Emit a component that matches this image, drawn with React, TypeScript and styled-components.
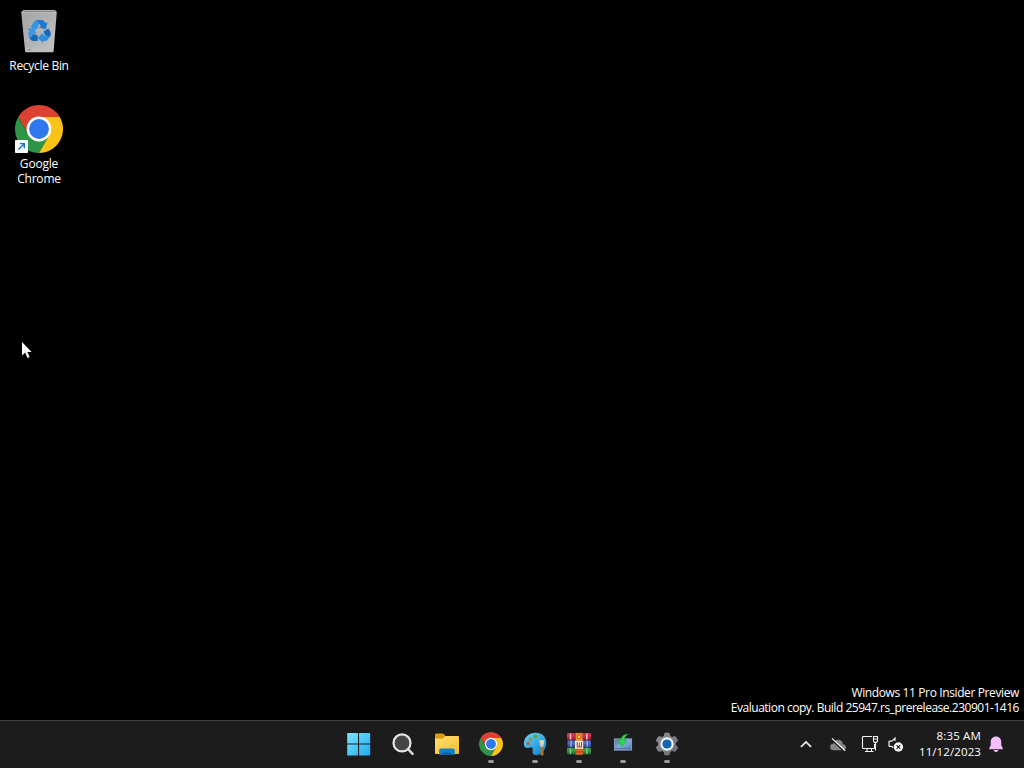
import React from 'react';
import styled, { createGlobalStyle } from 'styled-components';

const GlobalStyle = createGlobalStyle`
  * { box-sizing: border-box; }
  body { margin: 0; background: #000; overflow: hidden; }
  svg { display: block; flex: none; }
`;

const Screen = styled.div`
  position: relative;
  display: flex;
  flex-direction: column;
  width: 100vw;
  height: 100vh;
  background: #000;
  color: #fff;
  font-family: 'Open Sans', 'Noto Sans', sans-serif;
  font-size: 12px;
  cursor: default;
`;

const Desktop = styled.main`
  flex: 1;
  display: flex;
  flex-direction: column;
  justify-content: space-between;
  padding: 7px 5px 5px 1px;
`;

const Shortcuts = styled.div`
  display: flex;
  flex-direction: column;
  width: 76px;
`;

const Shortcut = styled.div`
  display: flex;
  flex-direction: column;
  align-items: center;
  height: 98px;
`;

const ShortcutLabel = styled.span<{ $spacing: number }>`
  margin-top: 3px;
  line-height: 15px;
  text-align: center;
  white-space: pre-line;
  letter-spacing: ${(p) => p.$spacing}px;
`;

const Watermark = styled.div`
  display: flex;
  flex-direction: column;
  align-items: flex-end;
  line-height: 15px;
`;

const WatermarkLine = styled.span<{ $spacing: number }>`
  letter-spacing: ${(p) => p.$spacing}px;
  white-space: nowrap;
`;

const Taskbar = styled.footer`
  display: grid;
  grid-template-columns: 1fr auto 1fr;
  height: 48px;
  border-top: 1px solid #424242;
  background: #1c1c1c;
`;

const Apps = styled.nav`
  grid-column: 2;
  display: flex;
`;

const AppButton = styled.div`
  display: flex;
  flex-direction: column;
  align-items: center;
  width: 44px;
  padding: 11px 0 0 1px;
`;

const Running = styled.span`
  width: 6px;
  height: 3px;
  margin-top: 4px;
  border-radius: 1.5px;
  background: #9a9a9a;
`;

const Tray = styled.div`
  display: flex;
  align-items: center;
  justify-content: flex-end;
  padding-right: 20px;
`;

const TrayItem = styled.div<{ $width: number }>`
  display: flex;
  justify-content: center;
  width: ${(p) => p.$width}px;
`;

const Clock = styled.div`
  display: flex;
  flex-direction: column;
  align-items: flex-end;
  width: 76px;
  margin-right: 7px;
  padding-bottom: 2px;
  font-size: 11.5px;
  line-height: 16px;
  white-space: nowrap;
`;

const ClockLine = styled.span<{ $spacing: number }>`
  letter-spacing: ${(p) => p.$spacing}px;
`;

const Pointer = styled.svg`
  position: absolute;
  left: 21px;
  top: 341px;
`;

const ChromeIcon = ({ size, shortcut }: { size: number; shortcut?: boolean }) => (
  <svg width={size} height={size} viewBox="0 0 48 48">
    <path fill="#dc4132" d="M24 12H44.78A24 24 0 0 0 3.22 12L13.61 30A12 12 0 0 1 24 12Z" />
    <path fill="#2c9547" d="M3.22 12A24 24 0 0 0 24 48L34.39 30A12 12 0 0 1 13.61 30Z" />
    <path fill="#fcc317" d="M44.78 12A24 24 0 0 1 24 48L34.39 30A12 12 0 0 0 24 12Z" />
    <circle cx="24" cy="24" r="12.4" fill="#fff" />
    <circle cx="24" cy="24" r="9.9" fill="#2f78ee" />
    {shortcut && (
      <g>
        <rect x="0" y="35" width="13" height="13" rx="0.8" fill="#f8fafb" />
        <path d="M3.4 44.6L9 39M4.8 38.6H9.3V43.2" fill="none" stroke="#1d74b8" strokeWidth="1.4" />
      </g>
    )}
  </svg>
);

const RecycleBinIcon = () => (
  <svg width="48" height="48" viewBox="0 0 48 48">
    <defs>
      <linearGradient id="bin" x1="0" y1="0" x2="1" y2="1">
        <stop offset="0" stopColor="#a3a4a5" />
        <stop offset="0.55" stopColor="#b3b4b5" />
        <stop offset="1" stopColor="#c4c4c5" />
      </linearGradient>
    </defs>
    <path d="M6.2 5L8 3.2H40L41.8 5L38.6 44.2Q38.5 45.2 37.5 45.2H11.2Q10.2 45.2 10.1 44.2Z" fill="url(#bin)" />
    <path d="M7.2 5.6L8.6 3.7H39.6L41 5.6Z" fill="#777878" stroke="#c9caca" strokeWidth="0.8" />
    <path d="M10.4 41H38.2L37.9 44.8H10.8Z" fill="#bdbdbe" />
    <path d="M12.8 43L15.8 42.6" stroke="#777" strokeWidth="1" />
    <g>
      <path d="M15.8 20L18.6 15.2Q20 13 22.2 13H25.6L21.8 22.6Z" fill="#3494e4" />
      <path d="M21.8 13H26.6Q28.6 13 29.5 14.6L30.4 16.2L32.6 15L30.8 22.2L23.8 20.6L26 19.3Z" fill="#1b79cc" />
      <path d="M28.6 24.2L33.5 21.4L35.4 25Q36.2 27 35.1 29L33.9 31L29.6 27.6Z" fill="#1668b7" />
      <path d="M34.4 30.1L32.9 32.5Q31.8 34 30 34H28.2V36L22.6 31L28.2 25.8V28.4H33Z" fill="#2d8edf" />
      <path d="M22.7 28.2V34H18.2Q16.4 34 15.3 32.2L13.9 29.4L18 27Z" fill="#1469bd" />
      <path d="M14 30Q12.4 27.2 13.7 24.9L14.5 23.5L12.2 22.1L19.3 20.2L21.4 27.2L18.9 25.9L16.4 30.6Z" fill="#3a98e5" />
    </g>
  </svg>
);

const StartIcon = () => (
  <svg width="24" height="24" viewBox="0 0 24 24">
    <defs>
      <linearGradient id="start" gradientUnits="userSpaceOnUse" x1="0" y1="0" x2="24" y2="24">
        <stop offset="0" stopColor="#82e5ff" />
        <stop offset="1" stopColor="#18a9f0" />
      </linearGradient>
    </defs>
    <path fill="url(#start)" d="M.8 1H11V11.5H.2V1.6Q.2 1 .8 1ZM12.1 1H22.6Q23.2 1 23.2 1.6V11.5H12.1ZM.2 12.6H11V23.5H.8Q.2 23.5 .2 22.9ZM12.1 12.6H23.2V22.9Q23.2 23.5 22.6 23.5H12.1Z" />
  </svg>
);

const SearchIcon = () => (
  <svg width="24" height="24" viewBox="0 0 24 24">
    <path d="M17.3 17.3L21.6 21.9" stroke="#d4d4d4" strokeWidth="2.6" strokeLinecap="round" />
    <circle cx="11" cy="10.9" r="8.5" fill="#454545" stroke="#e6e6e6" strokeWidth="2.2" />
  </svg>
);

const FolderIcon = () => (
  <svg width="26" height="24" viewBox="0 0 26 24">
    <defs>
      <linearGradient id="folder" x1="0" y1="0" x2="1" y2="1">
        <stop offset="0" stopColor="#ffdf76" />
        <stop offset="1" stopColor="#f5bd28" />
      </linearGradient>
    </defs>
    <path d="M1 2.4Q1 1.4 2.2 1.4H8.5Q9.3 1.4 9.8 2L11.6 3.9V8H1Z" fill="#d99a0c" />
    <path d="M1 6.4H8.6L11.5 3.9H24Q25 3.9 25 4.9V21Q25 22 24 22H2Q1 22 1 21Z" fill="url(#folder)" />
    <path d="M5.2 22.8V18.3Q5.2 16.6 7 16.6H19Q20.8 16.6 20.8 18.3V22.8Z" fill="#147dcc" />
    <path d="M8.8 22.8V21.5Q8.8 20.4 10 20.4H16Q17.2 20.4 17.2 21.5V22.8Z" fill="#0b5ea8" />
  </svg>
);

const PaintIcon = () => (
  <svg width="24" height="24" viewBox="0 0 24 24">
    <defs>
      <linearGradient id="paint" x1="0" y1="0" x2="0.7" y2="1">
        <stop offset="0" stopColor="#6fd5f1" />
        <stop offset="0.6" stopColor="#35a9e2" />
        <stop offset="1" stopColor="#1687d2" />
      </linearGradient>
    </defs>
    <path d="M11.8 .8C18.4 .2 23.4 4.5 23.3 10.8C23.2 17 19.4 22.9 13.5 23.2C10.5 23.4 9 21.4 9.6 19.1C10.2 17.2 9.7 15.6 8.2 15.2C6.7 14.8 5.5 16.5 3.5 15.9C.8 15 .5 11.9 1.1 9.2C2.3 4.4 6.6 1.2 11.8 .8Z" fill="url(#paint)" />
    <circle cx="12.3" cy="4.5" r="2" fill="#5fa348" />
    <circle cx="7.4" cy="7.3" r="1.9" fill="#8a9a62" />
    <circle cx="5.1" cy="11.4" r="1.8" fill="#cf5b3c" />
    <path d="M17.8 13H20L20.6 22.8Q19 24.6 17.4 22.8Z" fill="#a9713a" />
    <path d="M16.3 8.2H21.4L20.4 13.4H17.3Z" fill="#e8d3aa" />
    <path d="M17.2 12.2H20.4V14.8H17.2Z" fill="#c4cacc" />
  </svg>
);

const WinRarIcon = () => (
  <svg width="26" height="24" viewBox="0 0 26 24">
    <defs>
      <linearGradient id="redBook" x1="0" y1="0" x2="0" y2="1">
        <stop offset="0" stopColor="#b92f48" /><stop offset="0.4" stopColor="#d8354e" /><stop offset="1" stopColor="#8f152c" />
      </linearGradient>
      <linearGradient id="blueBook" x1="0" y1="0" x2="0" y2="1">
        <stop offset="0" stopColor="#4459a6" /><stop offset="0.4" stopColor="#4f70cf" /><stop offset="1" stopColor="#263b91" />
      </linearGradient>
      <linearGradient id="greenBook" x1="0" y1="0" x2="0" y2="1">
        <stop offset="0" stopColor="#2f7d3a" /><stop offset="0.4" stopColor="#3fa24a" /><stop offset="1" stopColor="#135d27" />
      </linearGradient>
    </defs>
    <rect x="1" y="1" width="24" height="7" rx="1" fill="url(#redBook)" />
    <rect x="1.5" y="8.2" width="23.5" height="7" rx="1" fill="url(#blueBook)" />
    <rect x="1" y="15.5" width="24" height="7" rx="1" fill="url(#greenBook)" />
    <path d="M4.5 1.5V7.5M20.8 1.5V7.5" stroke="#f0b9c2" strokeWidth="1.6" />
    <path d="M5 8.7V14.8M21.2 8.7V14.8" stroke="#9fb0e6" strokeWidth="1.4" />
    <path d="M4.5 16V22M20.8 16V22" stroke="#8cc48f" strokeWidth="1.4" />
    <path d="M9.4 0.8H17V23H9.4Z" fill="#b5541f" />
    <path d="M10.2 1.4H16.2V8.6H10.2Z" fill="#f0a02c" />
    <path d="M11.6 3H14.8V6.4H11.6Z" fill="#ffd463" stroke="#b53a1c" strokeWidth=".8" />
    <path d="M9.8 18.4H16.6M9.8 21.4H16.6" stroke="#e06a2e" strokeWidth="1.3" />
    <path d="M9 8.8H17.2V16.8H9Z" fill="#fff4e4" />
    <path d="M11.2 10V15H15.6V10M13.4 10.6V15" fill="none" stroke="#a3421f" strokeWidth="1.1" />
  </svg>
);

const InstallerIcon = () => (
  <svg width="24" height="24" viewBox="0 0 24 24">
    <defs>
      <linearGradient id="drive" x1="0" y1="0" x2="1" y2="1">
        <stop offset="0" stopColor="#477d9c" /><stop offset="0.5" stopColor="#82aed9" /><stop offset="1" stopColor="#4a76b8" />
      </linearGradient>
    </defs>
    <rect x="3.4" y="6.9" width="17.2" height="11.2" fill="url(#drive)" stroke="#8fa3c8" strokeWidth=".9" />
    <path d="M4 16.4H20" stroke="#5470a8" strokeWidth="1" />
    <path d="M17.2 2.2C13.1 2.1 10.3 4.2 10 8L7 7.9L10.8 14.6L16 9L13.2 8.7C13.2 5.8 14.3 3.7 17.2 2.2Z" fill="#2edb46" stroke="#159e3c" strokeWidth=".5" />
  </svg>
);

const SettingsIcon = () => (
  <svg width="24" height="24" viewBox="0 0 24 24">
    <defs>
      <linearGradient id="gear" x1="0" y1="0" x2="1" y2="1">
        <stop offset="0" stopColor="#8f9498" /><stop offset="1" stopColor="#646a70" />
      </linearGradient>
    </defs>
    <path d="M9.4 1Q12 .2 14.6 1L15.3 3.9L17.1 4.9L20 4.1Q22.5 6.2 23.2 8.8L21 10.8V13.2L23.2 15.2Q22.5 17.8 20 19.9L17.1 19.1L15.3 20.1L14.6 23Q12 23.8 9.4 23L8.7 20.1L6.9 19.1L4 19.9Q1.5 17.8 .8 15.2L3 13.2V10.8L.8 8.8Q1.5 6.2 4 4.1L6.9 4.9L8.7 3.9Z" fill="url(#gear)" />
    <circle cx="12" cy="12" r="6.7" fill="#f1f3f4" />
    <circle cx="12" cy="12" r="4.6" fill="#1265b0" />
  </svg>
);

const ChevronIcon = () => (
  <svg width="12" height="9" viewBox="0 0 12 9">
    <path d="M1 6.9L6 2L11 6.9" fill="none" stroke="#eee" strokeWidth="1.7" />
  </svg>
);

const CloudOffIcon = () => (
  <svg width="18" height="17" viewBox="0 0 18 17">
    <path d="M4.3 14.2H13.7C16.1 14.2 17.1 12.7 17 11.1C16.9 9.3 15.5 8.2 13.9 8.2C13.6 5.6 11.8 3.8 9.2 3.8C6.8 3.8 5 5.3 4.6 7.5C2.4 7.6 1.1 9 1.1 10.9C1.1 12.8 2.3 14.2 4.3 14.2Z" fill="#868686" />
    <path d="M2.2 3.1L15.2 15.3" stroke="#1c1c1c" strokeWidth="1.6" />
    <path d="M3 2.4L16.2 14.8" stroke="#f5f5f5" strokeWidth="1.2" />
  </svg>
);

const NetworkIcon = () => (
  <svg width="18" height="17" viewBox="0 0 18 17" fill="none" stroke="#f1f1f1" strokeWidth="1.1">
    <path d="M11 .5H2.5Q1.5 .5 1.5 1.5V11.5Q1.5 12.5 2.5 12.5H13.5V8" />
    <path d="M6 12.5V15.5M10.5 12.5V15.5M4 15.5H12.5" />
    <path d="M12.5 .5H16.5V4.5Q16.5 6.5 14.5 6.5Q12.5 6.5 12.5 4.5ZM12.5 3H16.5M14.5 6.5V14.5" />
  </svg>
);

const MutedIcon = () => (
  <svg width="16" height="17" viewBox="0 0 16 17">
    <path d="M7 5V2.2L3.8 5.2H1.5Q1 5.2 1 5.7V9.9Q1 10.4 1.5 10.4H3.8L5.2 11.8" fill="none" stroke="#eee" strokeWidth="1.2" />
    <circle cx="10.4" cy="11" r="4.7" fill="#f5f5f5" />
    <path d="M8.6 9.2L12.2 12.8M12.2 9.2L8.6 12.8" stroke="#1c1c1c" strokeWidth="1.1" />
  </svg>
);

const BellIcon = () => (
  <svg width="16" height="19" viewBox="0 0 16 19" fill="#f5bdfa">
    <path d="M8 1.6C4.9 1.6 2.7 3.9 2.7 6.9V10.2L1.2 13.2Q.8 14.3 1.8 14.3H14.2Q15.2 14.3 14.8 13.2L13.3 10.2V6.9C13.3 3.9 11.1 1.6 8 1.6Z" />
    <path d="M5.4 15.1H10.6Q9.8 17 8 17Q6.2 17 5.4 15.1Z" />
  </svg>
);

const apps = [
  { name: 'start', icon: <StartIcon />, running: false },
  { name: 'search', icon: <SearchIcon />, running: false },
  { name: 'explorer', icon: <FolderIcon />, running: false },
  { name: 'chrome', icon: <ChromeIcon size={24} />, running: true },
  { name: 'paint', icon: <PaintIcon />, running: true },
  { name: 'winrar', icon: <WinRarIcon />, running: true },
  { name: 'installer', icon: <InstallerIcon />, running: true },
  { name: 'settings', icon: <SettingsIcon />, running: true },
];

export default function App() {
  return (
    <Screen>
      <GlobalStyle />
      <Desktop>
        <Shortcuts>
          <Shortcut>
            <RecycleBinIcon />
            <ShortcutLabel $spacing={-0.3}>Recycle Bin</ShortcutLabel>
          </Shortcut>
          <Shortcut>
            <ChromeIcon size={48} shortcut />
            <ShortcutLabel $spacing={-0.2}>{'Google\nChrome'}</ShortcutLabel>
          </Shortcut>
        </Shortcuts>
        <Watermark>
          <WatermarkLine $spacing={-0.38}>Windows 11 Pro Insider Preview</WatermarkLine>
          <WatermarkLine $spacing={-0.48}>Evaluation copy. Build 25947.rs_prerelease.230901-1416</WatermarkLine>
        </Watermark>
      </Desktop>
      <Taskbar>
        <Apps>
          {apps.map((app) => (
            <AppButton key={app.name}>
              {app.icon}
              {app.running && <Running />}
            </AppButton>
          ))}
        </Apps>
        <Tray>
          <TrayItem $width={32}><ChevronIcon /></TrayItem>
          <TrayItem $width={32}><CloudOffIcon /></TrayItem>
          <TrayItem $width={32}><NetworkIcon /></TrayItem>
          <TrayItem $width={19}><MutedIcon /></TrayItem>
          <Clock>
            <ClockLine $spacing={0.15}>8:35 AM</ClockLine>
            <ClockLine $spacing={0.1}>11/12/2023</ClockLine>
          </Clock>
          <TrayItem $width={16}><BellIcon /></TrayItem>
        </Tray>
      </Taskbar>
      <Pointer width="13" height="19" viewBox="0 0 13 19">
        <path d="M1 1V14.6L4.2 11.6L6.4 17L8.6 16L6.4 10.9H10.6Z" fill="#fff" />
      </Pointer>
    </Screen>
  );
}
